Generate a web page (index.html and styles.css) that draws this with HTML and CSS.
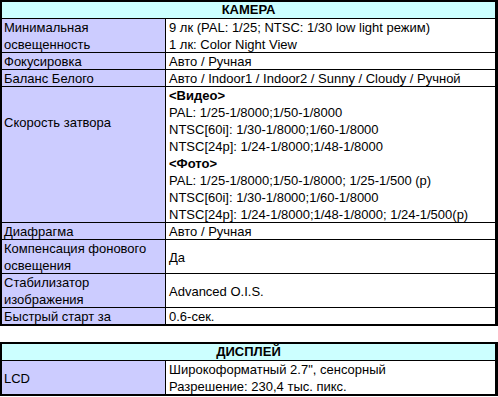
FILE: index.html
```html
<!DOCTYPE html>
<html lang="ru">
<head>
<meta charset="utf-8">
<link rel="stylesheet" href="styles.css">
</head>
<body>
<div class="spec">
  <div class="head">КАМЕРА</div>
  <div class="row">
    <div class="lbl"><span class="t">Минимальная<br>освещенность</span></div>
    <div class="val"><span class="t">9 лк (PAL: 1/25; NTSC: 1/30 low light режим)<br>1 лк: Color Night View</span></div>
  </div>
  <div class="row">
    <div class="lbl"><span class="t">Фокусировка</span></div>
    <div class="val"><span class="t">Авто / Ручная</span></div>
  </div>
  <div class="row">
    <div class="lbl"><span class="t">Баланс Белого</span></div>
    <div class="val"><span class="t">Авто / Indoor1 / Indoor2 / Sunny / Cloudy / Ручной</span></div>
  </div>
  <div class="row">
    <div class="lbl lbl-top"><span class="t">Скорость затвора</span></div>
    <div class="val"><span class="t"><b>&lt;Видео&gt;</b><br>PAL: 1/25-1/8000;1/50-1/8000<br>NTSC[60i]: 1/30-1/8000;1/60-1/8000<br>NTSC[24p]: 1/24-1/8000;1/48-1/8000<br><b>&lt;Фото&gt;</b><br>PAL: 1/25-1/8000;1/50-1/8000; 1/25-1/500 (p)<br>NTSC[60i]: 1/30-1/8000;1/60-1/8000<br>NTSC[24p]: 1/24-1/8000;1/48-1/8000; 1/24-1/500(p)</span></div>
  </div>
  <div class="row">
    <div class="lbl"><span class="t">Диафрагма</span></div>
    <div class="val"><span class="t">Авто / Ручная</span></div>
  </div>
  <div class="row">
    <div class="lbl"><span class="t">Компенсация фонового<br>освещения</span></div>
    <div class="val"><span class="t">Да</span></div>
  </div>
  <div class="row">
    <div class="lbl"><span class="t">Стабилизатор<br>изображения</span></div>
    <div class="val"><span class="t">Advanced O.I.S.</span></div>
  </div>
  <div class="row">
    <div class="lbl"><span class="t">Быстрый старт за</span></div>
    <div class="val"><span class="t">0.6-сек.</span></div>
  </div>
</div>

<div class="spec spec-2">
  <div class="head">ДИСПЛЕЙ</div>
  <div class="row">
    <div class="lbl"><span class="t">LCD</span></div>
    <div class="val"><span class="t">Широкоформатный 2.7", сенсорный<br>Разрешение: 230,4 тыс. пикс.</span></div>
  </div>
</div>
</body>
</html>
```

FILE: styles.css
```css
html, body {
  margin: 0;
  padding: 0;
  background: #fff;
}

body {
  font-family: "Liberation Sans", Arial, sans-serif;
  font-size: 13px;
  color: #000;
}

.spec {
  box-sizing: border-box;
  width: 498px;
  border: 2px solid #000;
  border-right-width: 3px;
}

.spec-2 {
  margin-top: 16px;
}

.head {
  height: 16px;
  line-height: 16px;
  background: #ccffff;
  border-bottom: 1px solid #000;
  text-align: center;
  font-weight: bold;
}

.row {
  display: grid;
  grid-template-columns: 164px 1fr;
  border-bottom: 1px solid #000;
}

.row:last-child {
  border-bottom: 0;
}

.lbl {
  background: #ccccff;
  border-right: 1px solid #000;
  padding-left: 2px;
  display: flex;
  align-items: center;
  line-height: 17px;
}

.lbl-top {
  align-items: flex-start;
  padding-top: 27px;
}

.val {
  background: #fff;
  padding-left: 3px;
  display: flex;
  align-items: center;
  line-height: 17px;
}

.t {
  display: block;
  margin-bottom: -1px;
  white-space: nowrap;
}
```
